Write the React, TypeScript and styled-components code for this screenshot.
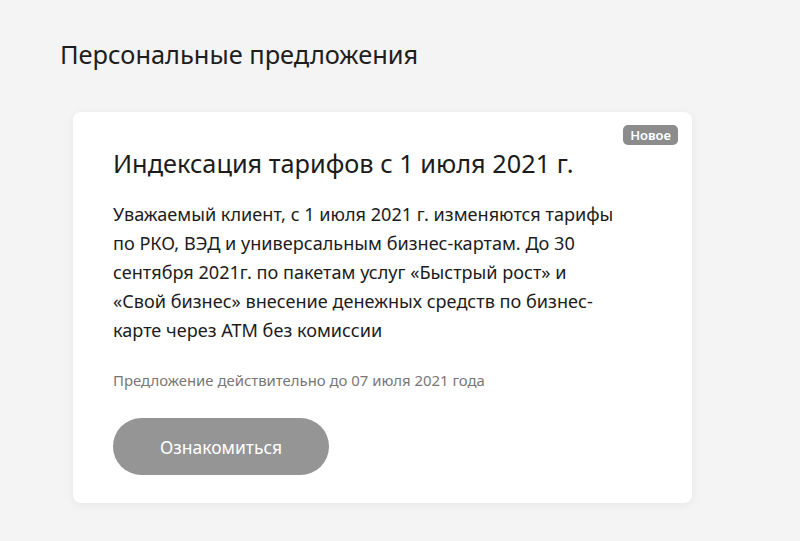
import { createGlobalStyle, styled } from 'styled-components';

const GlobalStyle = createGlobalStyle`
  html, body {
    margin: 0;
    padding: 0;
    background: #f4f4f4;
  }
  body {
    font-family: 'Noto Sans', 'Open Sans', sans-serif;
    color: #1c1c1c;
  }
`;

const Page = styled.div`
  width: 800px;
  height: 541px;
  box-sizing: border-box;
  padding: 36px 0 0 60px;
  background: #f4f4f4;
  overflow: hidden;
`;

const Heading = styled.h1`
  margin: 0 0 40px;
  font-size: 25.4px;
  font-weight: 400;
  line-height: 36px;
  color: #1e1e1e;
`;

const Card = styled.div`
  position: relative;
  width: 619px;
  margin-left: 13px;
  box-sizing: border-box;
  padding: 34px 40px 28px;
  background: #fff;
  border-radius: 8px;
  box-shadow: 0 2px 10px rgba(0, 0, 0, 0.06);
`;

const Badge = styled.span`
  position: absolute;
  top: 13px;
  right: 14px;
  height: 20px;
  padding: 0 7px;
  border-radius: 5px;
  background: #8c8c8c;
  color: #fff;
  font-size: 13px;
  font-weight: 600;
  line-height: 20px;
`;

const Title = styled.h2`
  margin: 0 0 20px;
  font-size: 25.3px;
  font-weight: 400;
  line-height: 34px;
`;

const Text = styled.p`
  margin: 0 0 25px;
  font-size: 18.1px;
  line-height: 29px;
`;

const Note = styled.p`
  margin: 0 0 28px;
  font-size: 14.9px;
  line-height: 20px;
  color: #777;
`;

const Button = styled.button`
  width: 216px;
  height: 57px;
  border: none;
  border-radius: 29px;
  background: #959595;
  color: #fff;
  font-family: inherit;
  font-size: 17.5px;
  cursor: pointer;
`;

export default function App() {
  return (
    <>
      <GlobalStyle />
      <Page>
        <Heading>Персональные предложения</Heading>
        <Card>
          <Badge>Новое</Badge>
          <Title>Индексация тарифов с 1 июля 2021 г.</Title>
          <Text>
            Уважаемый клиент, с 1 июля 2021 г. изменяются тарифы
            <br />
            по РКО, ВЭД и универсальным бизнес-картам. До 30
            <br />
            сентября 2021г. по пакетам услуг «Быстрый рост» и
            <br />
            «Свой бизнес» внесение денежных средств по бизнес-
            <br />
            карте через АТМ без комиссии
          </Text>
          <Note>Предложение действительно до 07 июля 2021 года</Note>
          <Button>Ознакомиться</Button>
        </Card>
      </Page>
    </>
  );
}
